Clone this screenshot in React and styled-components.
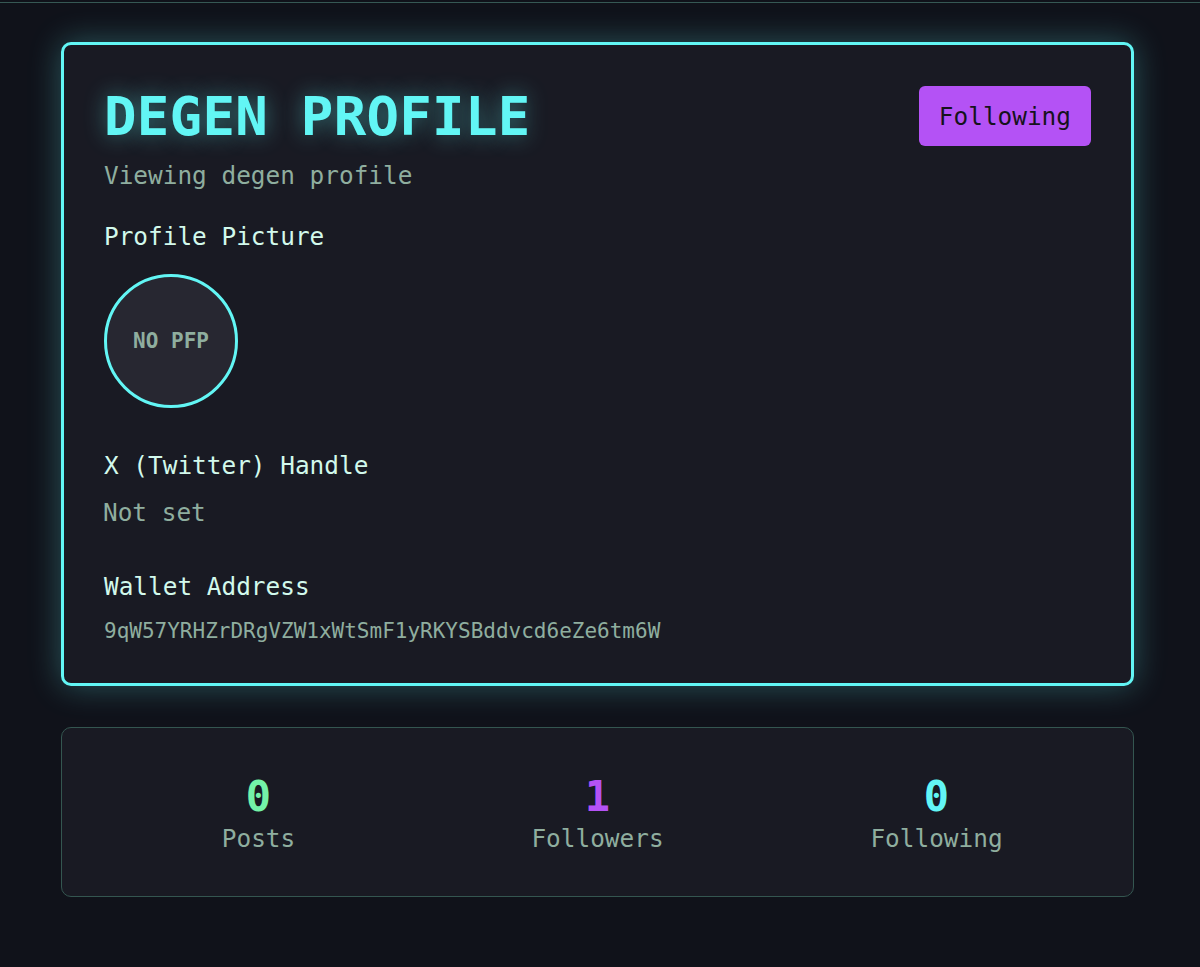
import React from "react";
import styled, { createGlobalStyle } from "styled-components";

const GlobalStyle = createGlobalStyle`
  html, body {
    margin: 0;
    padding: 0;
    background: #10121a;
    font-family: "DejaVu Sans Mono", "Liberation Mono", monospace;
  }
  * {
    box-sizing: border-box;
  }
`;

const TopRule = styled.div`
  height: 3px;
  border-bottom: 1px solid #365854;
`;

const Page = styled.main`
  width: 1073px;
  margin: 39px 0 0 61px;
  display: flex;
  flex-direction: column;
  gap: 41px;
`;

const ProfileCard = styled.section`
  background: #191a23;
  border: 3px solid #62f6f5;
  border-radius: 10px;
  padding: 40px;
  box-shadow: 0 0 32px rgba(98, 246, 245, 0.3);
  display: flex;
  flex-direction: column;
`;

const HeaderRow = styled.div`
  display: flex;
  justify-content: space-between;
  align-items: flex-start;
`;

const Title = styled.h1`
  margin: 0;
  font-size: 54px;
  font-weight: 700;
  color: #62f6f5;
  letter-spacing: 0.3px;
  text-shadow: 0 0 22px rgba(98, 246, 245, 0.45);
`;

const FollowButton = styled.button`
  margin-top: 1px;
  height: 60px;
  padding: 0 20px;
  border: none;
  border-radius: 6px;
  background: #b452f5;
  color: #16121c;
  font-family: inherit;
  font-size: 24.4px;
`;

const Subtitle = styled.p`
  margin: 14px 0 0;
  font-size: 24.4px;
  line-height: 28px;
  color: #8fae9f;
`;

const Label = styled.h3`
  margin: ${(p) => p.$top}px 0 0;
  font-size: 24.4px;
  line-height: 28px;
  font-weight: 400;
  color: #d2f9ec;
`;

const Avatar = styled.div`
  margin-top: 23px;
  width: 134px;
  height: 134px;
  border-radius: 50%;
  border: 3px solid #62f6f5;
  background: #272731;
  display: flex;
  align-items: center;
  justify-content: center;
  font-size: 21px;
  font-weight: 700;
  color: #8fae9f;
`;

const Value = styled.p`
  margin: ${(p) => p.$top}px 0 0 ${(p) => p.$indent || 0}px;
  font-size: ${(p) => p.$size}px;
  line-height: ${(p) => p.$lh}px;
  color: #8fae9f;
`;

const StatsCard = styled.section`
  background: #191a23;
  border: 1.5px solid #345650;
  border-radius: 10px;
  padding: 44px 27px 43px;
  display: grid;
  grid-template-columns: repeat(3, 1fr);
`;

const Stat = styled.div`
  display: flex;
  flex-direction: column;
  align-items: center;
  gap: 4px;
`;

const StatNumber = styled.span`
  font-size: 42px;
  line-height: 49px;
  font-weight: 700;
  color: ${(p) => p.$color};
`;

const StatLabel = styled.span`
  font-size: 24.4px;
  line-height: 28px;
  color: #8fae9f;
`;

const stats = [
  { value: 0, label: "Posts", color: "#74f3a8" },
  { value: 1, label: "Followers", color: "#b452f5" },
  { value: 0, label: "Following", color: "#62f6f5" },
];

export default function App() {
  return (
    <>
      <GlobalStyle />
      <TopRule />
      <Page>
        <ProfileCard>
          <HeaderRow>
            <Title>DEGEN PROFILE</Title>
            <FollowButton>Following</FollowButton>
          </HeaderRow>
          <Subtitle>Viewing degen profile</Subtitle>

          <Label $top={33}>Profile Picture</Label>
          <Avatar>NO PFP</Avatar>

          <Label $top={44}>X (Twitter) Handle</Label>
          <Value $top={19} $size={24.4} $lh={28} $indent={-1}>
            Not set
          </Value>

          <Label $top={46}>Wallet Address</Label>
          <Value $top={18} $size={21} $lh={24}>
            9qW57YRHZrDRgVZW1xWtSmF1yRKYSBddvcd6eZe6tm6W
          </Value>
        </ProfileCard>

        <StatsCard>
          {stats.map((s) => (
            <Stat key={s.label}>
              <StatNumber $color={s.color}>{s.value}</StatNumber>
              <StatLabel>{s.label}</StatLabel>
            </Stat>
          ))}
        </StatsCard>
      </Page>
    </>
  );
}
